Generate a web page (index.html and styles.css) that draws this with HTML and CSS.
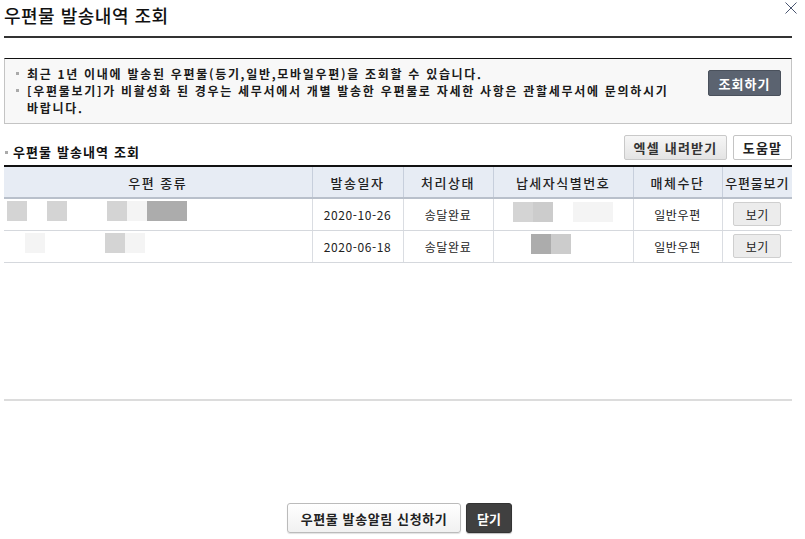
FILE: index.html
```html
<!DOCTYPE html>
<html lang="ko">
<head>
<meta charset="utf-8">
<title>우편물 발송내역 조회</title>
<link rel="stylesheet" href="styles.css">
</head>
<body>
<div class="popup">
  <header class="head">
    <h1 class="title">우편물 발송내역 조회</h1>
    <button class="close" aria-label="닫기">
      <svg width="12" height="12" viewBox="0 0 12 12"><path d="M0.5 0.5 L11.5 11.5 M11.5 0.5 L0.5 11.5" stroke="#4a5570" stroke-width="1" fill="none"/></svg>
    </button>
  </header>

  <section class="info">
    <ul class="info-list">
      <li>최근 1년 이내에 발송된 우편물(등기,일반,모바일우편)을 조회할 수 있습니다.</li>
      <li>[우편물보기]가 비활성화 된 경우는 세무서에서 개별 발송한 우편물로 자세한 사항은 관할세무서에 문의하시기 바랍니다.</li>
    </ul>
    <button class="btn-dark btn-search">조회하기</button>
  </section>

  <div class="sub-head">
    <h2 class="sub-title">우편물 발송내역 조회</h2>
    <div class="sub-btns">
      <button class="btn-gray btn-excel">엑셀 내려받기</button>
      <button class="btn-white btn-help">도움말</button>
    </div>
  </div>

  <div class="grid-area">
    <table class="grid">
      <colgroup>
        <col class="c1"><col class="c2"><col class="c3"><col class="c4"><col class="c5"><col class="c6">
      </colgroup>
      <thead>
        <tr><th>우편 종류</th><th>발송일자</th><th>처리상태</th><th>납세자식별번호</th><th>매체수단</th><th>우편물보기</th></tr>
      </thead>
      <tbody>
        <tr>
          <td class="redact-cell">
            <span class="blk g1" style="margin-left:3px"></span><span class="blk g0" style="width:20px"></span><span class="blk g1"></span><span class="blk g0" style="width:40px"></span><span class="blk g1"></span><span class="blk g3"></span><span class="blk g2" style="width:40px"></span>
          </td>
          <td>2020-10-26</td>
          <td>송달완료</td>
          <td class="redact-cell id-cell">
            <span class="blk g0" style="width:19px"></span><span class="blk g1"></span><span class="blk g4"></span><span class="blk g0" style="width:20px"></span><span class="blk g3" style="width:40px"></span>
          </td>
          <td>일반우편</td>
          <td><button class="btn-view">보기</button></td>
        </tr>
        <tr>
          <td class="redact-cell">
            <span class="blk g0" style="width:21px"></span><span class="blk g3"></span><span class="blk g0" style="width:60px"></span><span class="blk g1"></span><span class="blk g3"></span>
          </td>
          <td>2020-06-18</td>
          <td>송달완료</td>
          <td class="redact-cell id-cell">
            <span class="blk g0" style="width:37px"></span><span class="blk g2"></span><span class="blk g4"></span>
          </td>
          <td>일반우편</td>
          <td><button class="btn-view">보기</button></td>
        </tr>
      </tbody>
    </table>
  </div>

  <footer class="foot">
    <button class="btn-white btn-notify">우편물 발송알림 신청하기</button>
    <button class="btn-dark btn-close">닫기</button>
  </footer>
</div>
</body>
</html>
```

FILE: styles.css
```css
* { box-sizing: border-box; }
html, body { margin: 0; padding: 0; background: #fff; }
body {
  font-family: "Noto Sans CJK KR", "Noto Sans", "Liberation Sans", sans-serif;
  color: #111;
  width: 805px;
  height: 539px;
  overflow: hidden;
}
button { font-family: inherit; cursor: pointer; }

.popup {
  position: relative;
  padding: 0 13px 0 4px;
}

.head {
  height: 38px;
  border-bottom: 2px solid #333;
  display: flex;
  align-items: flex-start;
}
.title {
  margin: 0;
  padding-top: 3px;
  font-size: 18px;
  line-height: 24px;
  font-weight: 500;
  color: #111;
  letter-spacing: 0.5px;
}
.close {
  position: absolute;
  top: 2px;
  right: 8px;
  width: 12px;
  height: 12px;
  padding: 0;
  border: 0;
  background: none;
  display: flex;
}

.info {
  margin-top: 20px;
  height: 66px;
  background: #f8f8f8;
  border: 1px solid #c4c4c4;
  border-top: 1px solid #111;
  display: flex;
  align-items: flex-start;
  justify-content: space-between;
}
.info-list {
  list-style: none;
  margin: 0;
  padding: 6px 0 0 11px;
  width: 680px;
}
.info-list li {
  position: relative;
  padding-left: 11px;
  font-size: 12px;
  line-height: 17px;
  font-weight: 700;
  color: #1a1a1a;
  letter-spacing: 1.7px;
  word-break: keep-all;
}
.info-list li::before {
  content: "";
  position: absolute;
  left: 0;
  top: 7px;
  width: 3px;
  height: 3px;
  background: #aaa;
}

.btn-dark {
  background: #5b6370;
  color: #fff;
  border: 1px solid #4a515c;
  border-radius: 2px;
  font-weight: 700;
  font-size: 13px;
}
.btn-search {
  margin: 11px 10px 0 0;
  width: 73px;
  height: 26px;
  padding: 0;
  letter-spacing: 1px;
}

.sub-head {
  height: 41px;
  display: flex;
  align-items: flex-end;
  justify-content: space-between;
}
.sub-title {
  margin: 0 0 4px 0;
  position: relative;
  padding-left: 9px;
  font-size: 13px;
  line-height: 18px;
  font-weight: 700;
  color: #111;
  letter-spacing: 1.1px;
}
.sub-title::before {
  content: "";
  position: absolute;
  left: 1px;
  top: 8px;
  width: 3px;
  height: 3px;
  background: #aaa;
}
.sub-btns {
  display: flex;
  gap: 6px;
  margin-bottom: 5px;
}
.btn-gray {
  background: linear-gradient(#f6f6f6, #e4e4e4);
  border: 1px solid #c9c9c9;
  border-radius: 2px;
  color: #333;
  font-weight: 700;
  font-size: 13px;
}
.btn-white {
  background: #fff;
  border: 1px solid #c4c4c4;
  border-radius: 2px;
  color: #222;
  font-weight: 700;
  font-size: 13px;
}
.btn-excel { width: 103px; height: 25px; padding: 0; letter-spacing: 1.2px; }
.btn-help { width: 59px; height: 25px; padding: 0; letter-spacing: 1.2px; }

.grid-area {
  height: 236px;
  border-bottom: 2px solid #dcdcdc;
}
.grid {
  width: 100%;
  border-collapse: collapse;
  table-layout: fixed;
  border-top: 2px solid #111;
}
.c1 { width: 308px; }
.c2 { width: 91px; }
.c3 { width: 90px; }
.c4 { width: 140px; }
.c5 { width: 89px; }
.c6 { width: 70px; }
.grid th {
  height: 32px;
  background: #e7ecf4;
  font-size: 13px;
  font-weight: 500;
  color: #222;
  letter-spacing: 1.5px;
  border-left: 1px solid #c7cfdc;
  border-bottom: 2px solid #b9c0cb;
  padding: 0;
}
.grid th:last-child { letter-spacing: 0.8px; }
.grid th:first-child, .grid td:first-child { border-left: 0; }
.grid td {
  height: 32px;
  text-align: center;
  font-size: 12px;
  color: #222;
  border-left: 1px solid #dadde2;
  border-bottom: 1px solid #d5d8dd;
  padding: 0;
  letter-spacing: 0.6px;
}
.grid td.redact-cell {
  text-align: left;
  font-size: 0;
  vertical-align: top;
  padding-top: 2px;
}
.grid td.id-cell { padding-top: 3px; }
.blk {
  display: inline-block;
  width: 20px;
  height: 20px;
  vertical-align: top;
}
.g0 { background: transparent; }
.g1 { background: #d4d4d4; }
.g2 { background: #acacac; }
.g3 { background: #f4f4f4; }
.g4 { background: #cccccc; }

.btn-view {
  width: 48px;
  height: 24px;
  padding: 0;
  background: #ececec;
  border: 1px solid #cfcfcf;
  border-radius: 2px;
  font-size: 12px;
  color: #222;
  letter-spacing: 0.5px;
}

.foot {
  margin-top: 102px;
  display: flex;
  justify-content: center;
  gap: 5px;
  padding-left: 3px;
}
.btn-notify {
  width: 174px;
  height: 30px;
  padding: 0;
  border-radius: 3px;
  border-color: #bbb;
  background: linear-gradient(#ffffff, #f1f1f1);
  box-shadow: 0 1px 1px rgba(0,0,0,0.12);
  letter-spacing: 0.6px;
}
.btn-close {
  width: 46px;
  height: 30px;
  padding: 0;
  background: #404040;
  border: 1px solid #333;
  border-radius: 3px;
  box-shadow: 0 1px 1px rgba(0,0,0,0.25);
}
```
